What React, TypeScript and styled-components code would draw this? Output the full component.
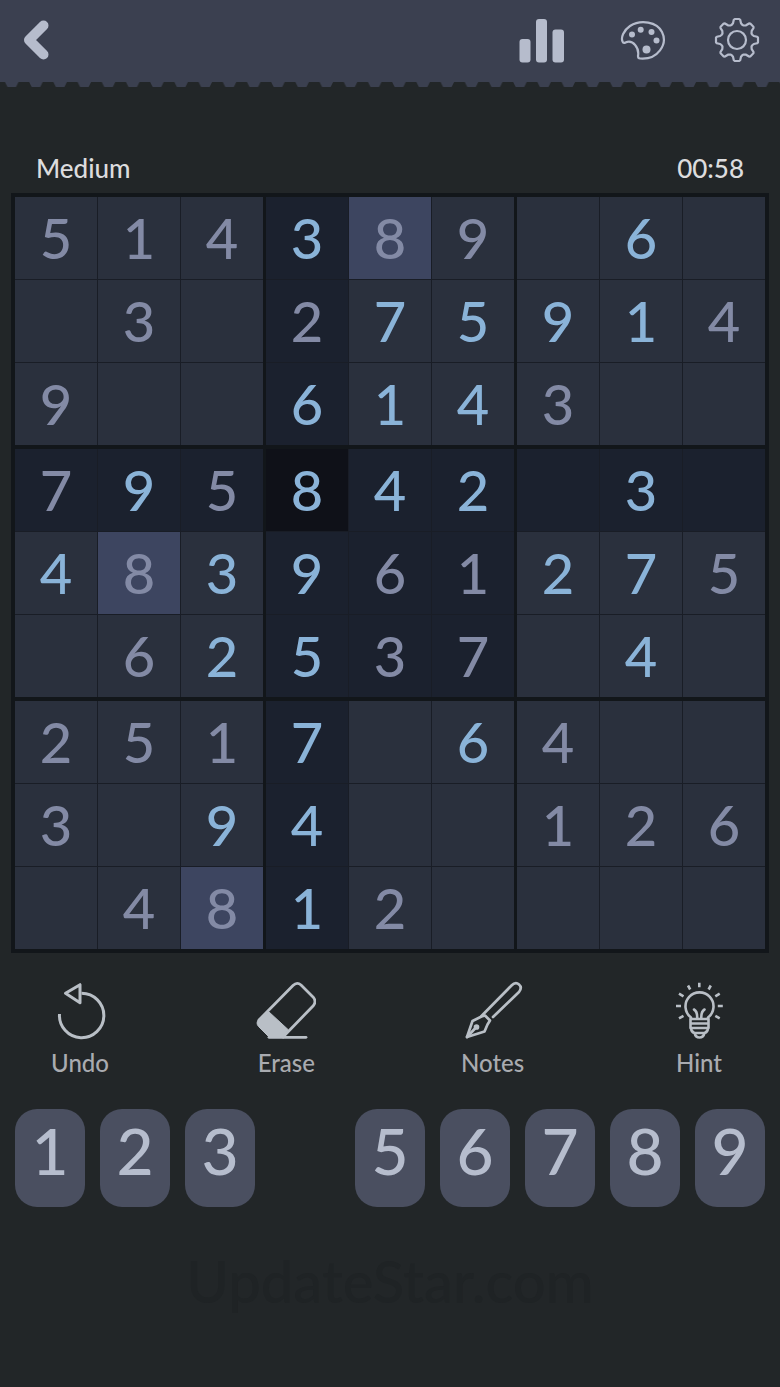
import React, { useState } from "react";
import styled, { createGlobalStyle, css } from "styled-components";

const GlobalStyle = createGlobalStyle`
  *, *::before, *::after { box-sizing: border-box; }
  html { background: #222628; }
  body { margin: 0; background: #222628; font-family: Lato, "Liberation Sans", sans-serif; font-weight: 500; }
  button { font: inherit; border: 0; padding: 0; background: none; cursor: pointer; }
`;

const Page = styled.div`
  min-height: 100vh;
  display: flex;
  flex-direction: column;
`;

const Header = styled.header`
  height: 82px;
  padding: 0 20px 2px 16px;
  display: flex;
  align-items: center;
  justify-content: space-between;
  background: #3b4050;
`;

const HeaderActions = styled.div`
  display: flex;
  gap: 48px;
`;

const IconButton = styled.button`
  display: block;
  color: #b6bccc;
  svg { display: block; }
`;

const Scallops = styled.svg`
  display: block;
  width: 100%;
  height: 5px;
`;

const Status = styled.div`
  display: flex;
  justify-content: space-between;
  padding: 65px 36px 9px;
  font-size: 26px;
  line-height: 32px;
  color: #dcdcde;
`;

const Board = styled.main`
  margin: 0 11px;
  padding: 4px;
  display: grid;
  grid-template-columns: repeat(3, 1fr);
  gap: 4px 3px;
  background: #12161a;
`;

const Box = styled.div`
  display: grid;
  grid-template-columns: repeat(3, 1fr);
  gap: 1px;
  background: #191d26;
`;

type Tone = "plain" | "line" | "match" | "selected";

const tones: Record<Tone, string> = {
  plain: "#2a303d",
  line: "#1b212e",
  match: "#3d4560",
  selected: "#0f1118",
};

const Cell = styled.button<{ $tone: Tone; $entered: boolean }>`
  aspect-ratio: 1;
  min-width: 0;
  display: flex;
  align-items: center;
  justify-content: center;
  font-size: 56px;
  line-height: 80px;
  background: ${(p) => tones[p.$tone]};
  color: ${(p) => (p.$entered ? "#8ab3d8" : "#838aa5")};
`;

const Tools = styled.div`
  display: flex;
  justify-content: space-between;
  padding: 27px 36px 0 35px;
`;

const Tool = styled.button`
  width: 90px;
  display: flex;
  flex-direction: column;
  align-items: center;
  gap: 8px;
  color: #b9bfc6;
`;

const ToolLabel = styled.span`
  font-size: 24px;
  line-height: 30px;
  color: #a9abb0;
`;

const Pad = styled.div`
  display: grid;
  grid-template-columns: repeat(9, 1fr);
  gap: 15px;
  padding: 31px 15px 0;
`;

const key = css`
  height: 98px;
  border-radius: 22px;
`;

const Key = styled.button`
  ${key}
  padding-bottom: 14px;
  background: #4a4f60;
  color: #b6bdcd;
  font-size: 64px;
  line-height: 84px;
`;

const EmptyKey = styled.span`
  ${key}
`;

const Footer = styled.footer`
  margin-top: 38px;
  text-align: center;
  font-size: 58px;
  line-height: 72px;
  color: #1f2325;
`;

/* A trailing "+" marks a digit entered by the player. */
const rows = [
  "5 1 4 3+ 8 9 . 6+ .",
  ". 3 . 2 7+ 5+ 9+ 1+ 4",
  "9 . . 6+ 1+ 4+ 3 . .",
  "7 9+ 5 8+ 4+ 2+ . 3+ .",
  "4+ 8 3+ 9+ 6 1 2+ 7+ 5",
  ". 6 2+ 5+ 3 7 . 4+ .",
  "2 5 1 7+ . 6+ 4 . .",
  "3 . 9+ 4+ . . 1 2 6",
  ". 4 8 1+ 2 . . . .",
].map((row) =>
  row.split(" ").map((s) => ({ digit: s[0] === "." ? "" : s[0], entered: s.endsWith("+") }))
);

const three = [0, 1, 2];

function toneOf(r: number, c: number, sr: number, sc: number): Tone {
  if (r === sr && c === sc) return "selected";
  const digit = rows[r][c].digit;
  if (digit && digit === rows[sr][sc].digit) return "match";
  const sameBox = Math.floor(r / 3) === Math.floor(sr / 3) && Math.floor(c / 3) === Math.floor(sc / 3);
  return r === sr || c === sc || sameBox ? "line" : "plain";
}

const stroke = {
  fill: "none",
  stroke: "currentColor",
  strokeWidth: 2.2,
  strokeLinecap: "round",
  strokeLinejoin: "round",
} as const;

const BackIcon = () => (
  <svg width="40" height="40" viewBox="0 0 40 40" {...stroke} strokeWidth={10}>
    <path d="M27.500 5.500 13 20l14.500 14.500" />
  </svg>
);

const StatsIcon = () => (
  <svg width="54" height="46" viewBox="0 0 54 46" fill="currentColor">
    <rect x="1.500" y="22" width="11" height="23.500" rx="3" />
    <rect x="18" y="2" width="11" height="43.500" rx="3" />
    <rect x="34.500" y="12.500" width="11.500" height="33" rx="3" />
  </svg>
);

const PaletteIcon = () => (
  <svg width="46" height="46" viewBox="0 0 46 46" {...stroke}>
    <path d="M3 25.500C0 21 4 13 10 9 21 2 37 5 42 15 48 27 38 43 20 41.500c-1.500 0-2-1-2-2.500 1.500-8-5-17-12.500-13.500-1 .6-2 .5-2.500 0Z" />
    <g fill="currentColor" stroke="none">
      <circle cx="12" cy="17.500" r="3" />
      <circle cx="20.700" cy="12.800" r="3" />
      <circle cx="31.500" cy="15" r="3" />
      <circle cx="36.500" cy="23.500" r="3" />
      <circle cx="26.500" cy="32.500" r="4" />
    </g>
  </svg>
);

const toothOutline = [
  [-5.5, -15],
  [-4, -16.8],
  [-3.2, -20.2],
  [-2.2, -21],
  [2.2, -21],
  [3.2, -20.2],
  [4, -16.8],
  [5.5, -15],
];

const gearPoints = Array.from({ length: 8 }, (_, i) => {
  const a = (i * Math.PI) / 4;
  return toothOutline
    .map(([x, y]) => `${x * Math.cos(a) - y * Math.sin(a)},${x * Math.sin(a) + y * Math.cos(a)}`)
    .join(" ");
}).join(" ");

const GearIcon = () => (
  <svg width="46" height="46" viewBox="-23 -23 46 46" {...stroke}>
    <polygon points={gearPoints} />
    <circle r="9" />
  </svg>
);

const UndoIcon = () => (
  <svg width="60" height="60" viewBox="0 0 60 60" {...stroke} strokeWidth={3}>
    <path d="M9.500 34A22.200 22.200 0 1 0 31.500 13.300" strokeLinecap="butt" />
    <path d="M15.500 13.300 30 4.700v18Z" />
  </svg>
);

const EraseIcon = () => (
  <svg width="60" height="60" viewBox="0 0 60 60" {...stroke} strokeWidth={2.8}>
    <path d="M3 40 37 5.500q4-4 8-.5l12.500 12.500q3 4 0 8L27 57" />
    <path d="M13 57.300h37" />
    <path d="M12.500 31.500 32 49.500l-4.500 8H13.500L2.500 46.500q-3-3.500 0-7Z" fill="currentColor" strokeWidth={1} />
  </svg>
);

const NotesIcon = () => (
  <svg width="60" height="60" viewBox="0 0 60 60" {...stroke} strokeWidth={2.7}>
    <path d="M18.500 36 48.500 5.500q4-4 7.500-1t0 7.500L30 37" />
    <path d="M4 57 9.500 41l9-4.500L22 35.500l5 5-2.500 4-3 7Z" />
    <path d="m4 57 8.500-9" />
    <circle cx="13.500" cy="47" r="1.500" fill="currentColor" />
  </svg>
);

const HintIcon = () => (
  <svg width="60" height="60" viewBox="0 0 60 60" {...stroke} strokeWidth={2.6}>
    <path d="M22 39v-1.500a14 14 0 1 1 17 0V39" />
    <path d="M21.500 39h18v4.500h-18ZM21.500 43.500V48h18v-4.500M22 48q0 4 3.500 5h10q3.500-1 3.500-5M25.500 53q1 4.500 5 4.500t5-4.500" />
    <path d="M25 29.500q3.500 2 3.200 9M35.500 29.500q-3.500 2-3.200 9" />
    <path
      d="M30.300 2.800v4.500M19 5.500l2.200 4M41.800 5.500l-2.200 4M10 13.600l4.500 2.700M50.700 13.600 46.300 16.300M7 26h5M48.800 26h5M10 38.300l4.500-2.500M50.700 38.300 46.300 35.800"
      strokeLinecap="butt"
    />
  </svg>
);

const tools = [
  { label: "Undo", Icon: UndoIcon },
  { label: "Erase", Icon: EraseIcon },
  { label: "Notes", Icon: NotesIcon },
  { label: "Hint", Icon: HintIcon },
];

const keys = ["1", "2", "3", "", "5", "6", "7", "8", "9"];

export default function App() {
  const [[sr, sc], setSelected] = useState([3, 3]);

  return (
    <Page>
      <GlobalStyle />
      <Header>
        <IconButton aria-label="Back"><BackIcon /></IconButton>
        <HeaderActions>
          <IconButton aria-label="Statistics"><StatsIcon /></IconButton>
          <IconButton aria-label="Themes"><PaletteIcon /></IconButton>
          <IconButton aria-label="Settings"><GearIcon /></IconButton>
        </HeaderActions>
      </Header>
      <Scallops aria-hidden="true">
        <defs>
          <pattern id="teeth" width="24.200" height="5" patternUnits="userSpaceOnUse">
            <path d="M5 0H18.500L16 5H7.500Z" fill="#3b4050" />
          </pattern>
        </defs>
        <rect width="100%" height="5" fill="url(#teeth)" />
      </Scallops>

      <Status>
        <span>Medium</span>
        <time>00:58</time>
      </Status>

      <Board>
        {three.map((br) =>
          three.map((bc) => (
            <Box key={`${br}${bc}`}>
              {three.map((i) =>
                three.map((j) => {
                  const r = br * 3 + i;
                  const c = bc * 3 + j;
                  const { digit, entered } = rows[r][c];
                  return (
                    <Cell
                      key={`${r}${c}`}
                      $tone={toneOf(r, c, sr, sc)}
                      $entered={entered}
                      aria-label={`Row ${r + 1}, column ${c + 1}: ${digit || "empty"}`}
                      onClick={() => setSelected([r, c])}
                    >
                      {digit}
                    </Cell>
                  );
                })
              )}
            </Box>
          ))
        )}
      </Board>

      <Tools>
        {tools.map(({ label, Icon }) => (
          <Tool key={label}>
            <Icon />
            <ToolLabel>{label}</ToolLabel>
          </Tool>
        ))}
      </Tools>

      <Pad>
        {keys.map((k, i) => (k ? <Key key={i}>{k}</Key> : <EmptyKey key={i} />))}
      </Pad>

      <Footer>UpdateStar.com</Footer>
    </Page>
  );
}
